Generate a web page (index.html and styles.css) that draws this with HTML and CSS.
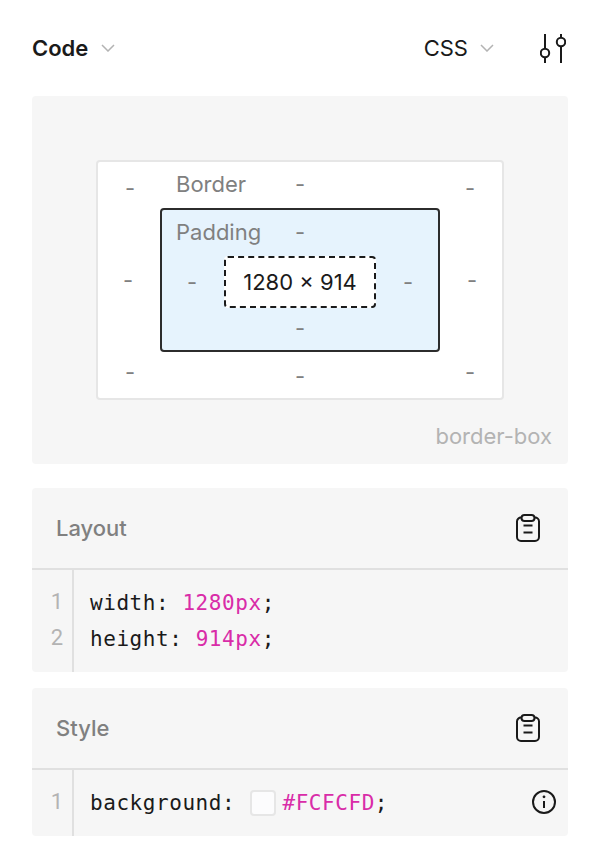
FILE: index.html
```html
<!DOCTYPE html>
<html lang="en">
<head>
<meta charset="utf-8">
<title>Code</title>
<link rel="stylesheet" href="styles.css">
</head>
<body>
<main class="panel">
  <header class="topbar">
    <div class="picker picker-title">
      <span>Code</span>
      <svg class="chevron" width="14" height="8" viewBox="0 0 14 8"><path d="M1 1l6 6 6-6"/></svg>
    </div>
    <div class="picker picker-lang">
      <span>CSS</span>
      <svg class="chevron" width="14" height="8" viewBox="0 0 14 8"><path d="M1 1l6 6 6-6"/></svg>
    </div>
    <svg class="icon settings" width="26" height="30" viewBox="0 0 26 30"><path d="M5 0v14M5 24v5M21 0v3M21 13v16"/><circle cx="5" cy="19" r="4.200"/><circle cx="21" cy="8" r="4.200"/></svg>
  </header>

  <section class="card box-card">
    <div class="box-outer">
      <span class="dash corner-tl">-</span>
      <div class="edge"><span class="label">Border</span><span class="dash">-</span></div>
      <span class="dash corner-tr">-</span>
      <span class="dash nudge-l">-</span>
      <div class="box-inner">
        <div class="edge edge-wide"><span class="label">Padding</span><span class="dash">-</span></div>
        <span class="dash nudge-l">-</span>
        <div class="box-size">1280 × 914</div>
        <span class="dash nudge-r">-</span>
        <span class="dash bottom-dash">-</span>
      </div>
      <span class="dash nudge-r">-</span>
      <span class="dash corner-bl">-</span>
      <span class="dash low-mid">-</span>
      <span class="dash corner-br">-</span>
    </div>
    <div class="box-mode">border-box</div>
  </section>

  <section class="card code-card">
    <div class="code-head">
      <h2>Layout</h2>
      <svg class="icon" width="24" height="28" viewBox="0 0 24 28"><path d="M5.500 3.500H5a4 4 0 0 0-4 4V23a4 4 0 0 0 4 4h14a4 4 0 0 0 4-4V7.500a4 4 0 0 0-4-4h-.5"/><rect x="5.500" y="1" width="13" height="6" rx="3"/><path d="M7.500 11.500h9M7.500 18.500h9"/></svg>
    </div>
    <div class="code-body">
      <div class="gutter"><span>1</span><span>2</span></div>
      <div class="lines">
        <div class="line">width: <span class="val">1280px</span>;</div>
        <div class="line">height: <span class="val">914px</span>;</div>
      </div>
    </div>
  </section>

  <section class="card code-card">
    <div class="code-head">
      <h2>Style</h2>
      <svg class="icon" width="24" height="28" viewBox="0 0 24 28"><path d="M5.500 3.500H5a4 4 0 0 0-4 4V23a4 4 0 0 0 4 4h14a4 4 0 0 0 4-4V7.500a4 4 0 0 0-4-4h-.5"/><rect x="5.500" y="1" width="13" height="6" rx="3"/><path d="M7.500 11.500h9M7.500 18.500h9"/></svg>
    </div>
    <div class="code-body">
      <div class="gutter"><span>1</span></div>
      <div class="lines">
        <div class="line line-swatch"><span>background: </span><i class="swatch"></i><span class="val">#FCFCFD</span><span>;</span><svg class="icon info" width="24" height="24" viewBox="0 0 24 24"><circle cx="12" cy="12" r="11"/><path d="M12 11v7"/><circle class="dot" cx="12" cy="6.800" r="1.400"/></svg></div>
      </div>
    </div>
  </section>
</main>
</body>
</html>
```

FILE: styles.css
```css
* { box-sizing: border-box; }

html, body { margin: 0; background: #fff; }

body {
  font-family: Inter, "Noto Sans", sans-serif;
  color: #1a1a1a;
}

.panel {
  width: 600px;
  padding: 0 32px;
  display: flex;
  flex-direction: column;
}

.topbar {
  height: 96px;
  display: flex;
  align-items: center;
}

.picker {
  display: flex;
  align-items: center;
  font-size: 22px;
  line-height: 28px;
}

.picker-title { font-weight: 600; gap: 13px; }
.picker-lang { margin-left: auto; gap: 12px; }
.settings { margin: 2px 2px 0 46px; }

.chevron { fill: none; stroke: #b3b3b3; stroke-width: 1.500; }

.icon { fill: none; stroke: #1a1a1a; stroke-width: 2; flex: none; }
.icon .dot { fill: #1a1a1a; stroke: none; }

.card { background: #f6f6f6; border-radius: 4px; }

.box-card {
  height: 368px;
  padding: 64px 16px 0 64px;
  margin-bottom: 24px;
}

.box-outer {
  width: 408px;
  height: 240px;
  background: #fff;
  border: 2px solid #e6e6e6;
  border-radius: 4px;
  display: grid;
  grid-template-columns: 62px 280px 62px;
  grid-template-rows: 46px 144px 46px;
  align-items: center;
  justify-items: center;
  color: #808080;
  font-size: 22px;
}

.dash { line-height: 24px; }
.nudge-l { margin-right: 2px; }
.nudge-r { margin-left: 2px; }
.corner-tl { margin: 6px 0 0 2px; }
.corner-tr { margin: 6px 2px 0 0; }
.corner-bl { margin: 0 0 6px 2px; }
.corner-br { margin: 0 2px 6px 0; }
.low-mid { margin-top: 2px; }

.edge {
  width: 100%;
  margin-bottom: 2px;
  display: grid;
  grid-template-columns: 1fr auto 1fr;
  align-items: center;
}

.edge .label { grid-column: 1; grid-row: 1; padding-left: 16px; line-height: 28px; }
.edge .dash { grid-column: 2; grid-row: 1; }
.edge-wide { grid-column: 1 / -1; }
.edge-wide .label { padding-left: 14px; }

.box-inner {
  width: 280px;
  height: 144px;
  background: #e6f3fd;
  border: 2px solid #2c2c2c;
  border-radius: 4px;
  display: grid;
  grid-template-columns: 62px 152px 62px;
  grid-template-rows: 46px 52px 42px;
  align-items: center;
  justify-items: center;
}

.bottom-dash { grid-column: 2; margin-bottom: 2px; }

.box-size {
  width: 152px;
  height: 52px;
  background: #fff;
  border: 2px dashed #1a1a1a;
  border-radius: 4px;
  color: #1a1a1a;
  display: flex;
  align-items: center;
  justify-content: center;
  white-space: nowrap;
}

.box-mode {
  margin-top: 22px;
  text-align: right;
  color: #b3b3b3;
  font-size: 22px;
  line-height: 28px;
}

.code-card { margin-bottom: 16px; overflow: hidden; }

.code-head {
  height: 82px;
  padding: 0 28px 0 24px;
  border-bottom: 2px solid #e0e0e0;
  display: flex;
  align-items: center;
  justify-content: space-between;
}

.code-head h2 {
  margin: 0;
  font-size: 22px;
  line-height: 28px;
  font-weight: 500;
  color: #808080;
}

.code-body { display: flex; }

.gutter {
  width: 42px;
  padding: 14px 0 16px 10px;
  border-right: 2px solid #e0e0e0;
  display: flex;
  flex-direction: column;
  align-items: center;
  color: #b3b3b3;
  font: 22px/36px Roboto, sans-serif;
}

.lines {
  flex: 1;
  padding: 15px 12px 15px 16px;
  font: 21px/36px "DejaVu Sans Mono", monospace;
  letter-spacing: 0.56px;
}

.line { height: 36px; white-space: pre; }
.line-swatch { display: flex; align-items: center; }
.val { color: #d92ca8; }

.swatch {
  width: 26px;
  height: 26px;
  margin: 0 6px 0 2px;
  background: #fcfcfd;
  border: 2px solid #e6e6e6;
  border-radius: 4px;
  flex: none;
}

.info { margin-left: auto; margin-top: -2px; }
```
